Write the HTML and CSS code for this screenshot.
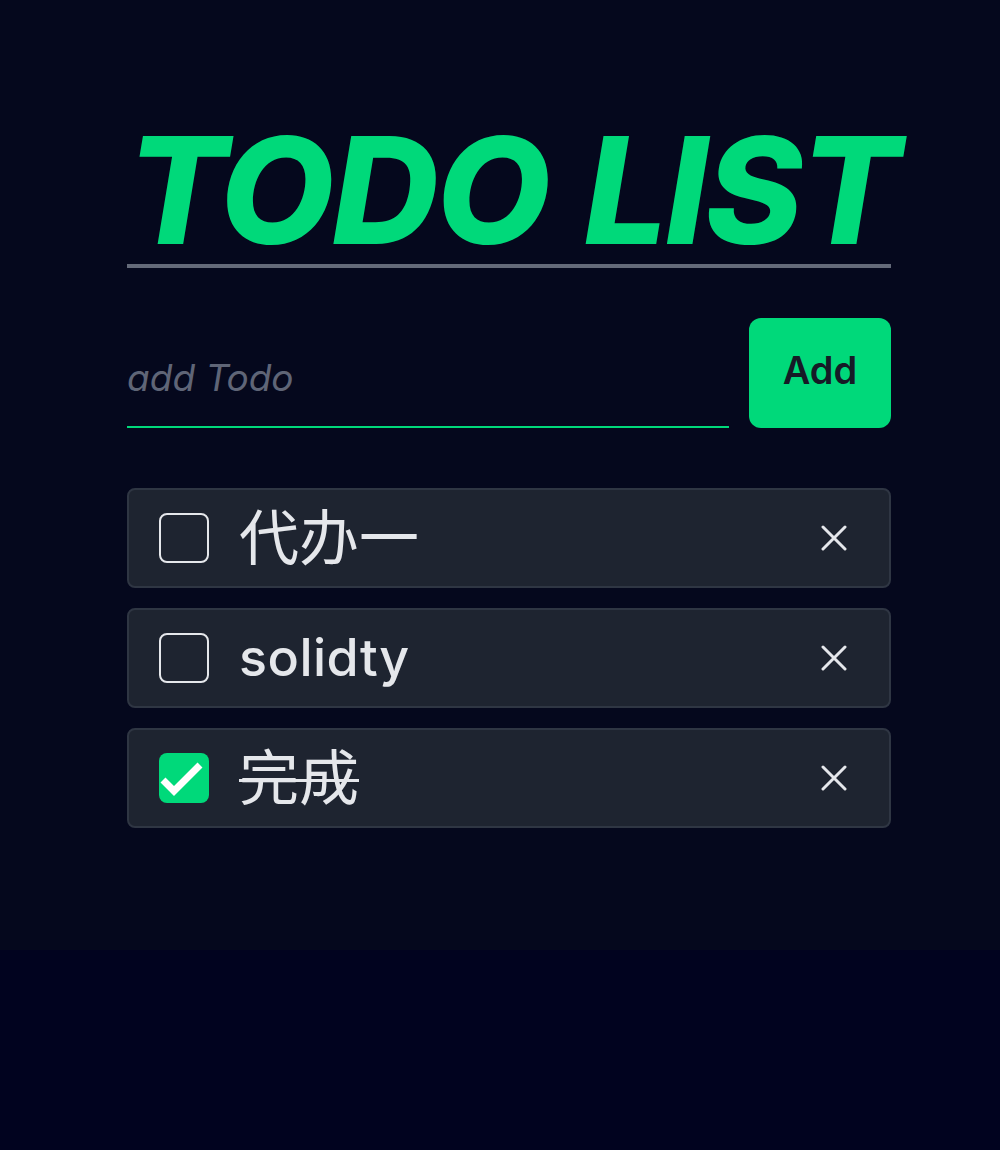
FILE: index.html
```html
<!DOCTYPE html>
<html lang="en">
<head>
<meta charset="utf-8">
<title>Todo List</title>
<link rel="stylesheet" href="styles.css">
</head>
<body>
<main class="app">
  <div class="container">
    <h1 class="title">TODO LIST</h1>
    <form class="add-form" onsubmit="return false">
      <input class="add-input" type="text" placeholder="add Todo">
      <button class="add-btn" type="submit">Add</button>
    </form>
    <ul class="todo-list">
      <li class="todo-item">
        <span class="check"></span>
        <span class="todo-text zh">代办一</span>
        <button class="remove" type="button" aria-label="delete">
          <svg viewBox="0 0 26 26" width="26" height="26"><path d="M2 2L24 24M24 2L2 24" stroke="#e5e7eb" stroke-width="3" stroke-linecap="round"/></svg>
        </button>
      </li>
      <li class="todo-item">
        <span class="check"></span>
        <span class="todo-text">solidty</span>
        <button class="remove" type="button" aria-label="delete">
          <svg viewBox="0 0 26 26" width="26" height="26"><path d="M2 2L24 24M24 2L2 24" stroke="#e5e7eb" stroke-width="3" stroke-linecap="round"/></svg>
        </button>
      </li>
      <li class="todo-item">
        <span class="check checked">
          <svg viewBox="0 0 50 50" width="50" height="50"><path d="M4 27L15 38L41 12" fill="none" stroke="#ffffff" stroke-width="7"/></svg>
        </span>
        <span class="todo-text zh done">完成</span>
        <button class="remove" type="button" aria-label="delete">
          <svg viewBox="0 0 26 26" width="26" height="26"><path d="M2 2L24 24M24 2L2 24" stroke="#e5e7eb" stroke-width="3" stroke-linecap="round"/></svg>
        </button>
      </li>
    </ul>
  </div>
</main>
</body>
</html>
```
FILE: styles.css
```css
* { box-sizing: border-box; }
html, body { margin: 0; padding: 0; }
body {
  background: #01031f;
  font-family: Inter, "Noto Sans CJK SC", sans-serif;
  color: #e5e7eb;
}
.app {
  background: #05081d;
  height: 950px;
  padding-top: 118px;
}
.container {
  width: 764px;
  margin-left: 127px;
  display: flex;
  flex-direction: column;
}
.title {
  margin: 0;
  font-size: 148px;
  line-height: 146px;
  font-weight: 800;
  font-style: italic;
  color: #00d97a;
  letter-spacing: -2.5px;
  word-spacing: 6px;
  border-bottom: 4px solid #646a79;
  white-space: nowrap;
}
.add-form {
  display: flex;
  gap: 20px;
  margin-top: 50px;
  align-items: stretch;
}
.add-input {
  flex: 1;
  min-width: 0;
  background: transparent;
  border: none;
  border-bottom: 2px solid #00d97a;
  outline: none;
  padding: 0;
  font-family: Inter, "Noto Sans CJK SC", sans-serif;
  font-size: 37px;
  color: #e5e7eb;
  height: 110px;
  padding-top: 10px;
}
.add-input::placeholder {
  color: #5f6577;
  font-style: italic;
}
.add-btn {
  flex: none;
  width: 142px;
  height: 110px;
  border: none;
  border-radius: 12px;
  background: #00d97a;
  color: #161b26;
  font-family: Inter, sans-serif;
  font-size: 38px;
  font-weight: 600;
  padding: 0;
  padding-bottom: 6px;
}
.todo-list {
  list-style: none;
  margin: 60px 0 0;
  padding: 0;
  display: flex;
  flex-direction: column;
  gap: 20px;
}
.todo-item {
  display: flex;
  align-items: center;
  height: 100px;
  padding: 0 30px;
  background: #1e2430;
  border: 2px solid #2f3643;
  border-radius: 8px;
  gap: 30px;
}
.check {
  width: 50px;
  height: 50px;
  flex: none;
  border: 2px solid #e5e7eb;
  border-radius: 8px;
  display: flex;
}
.check.checked {
  border: none;
  background: #00d97a;
}
.todo-text {
  flex: 1;
  font-size: 52px;
  font-weight: 500;
  letter-spacing: 0.5px;
  line-height: 60px;
  color: #e5e7eb;
}
.todo-text.zh {
  font-size: 60px;
  font-weight: 400;
  letter-spacing: 0;
}
.todo-text.done {
  text-decoration: line-through;
  text-decoration-thickness: 3px;
}
.remove {
  width: 50px;
  height: 50px;
  flex: none;
  background: transparent;
  border: none;
  padding: 0;
  display: flex;
  align-items: center;
  justify-content: center;
}
```
